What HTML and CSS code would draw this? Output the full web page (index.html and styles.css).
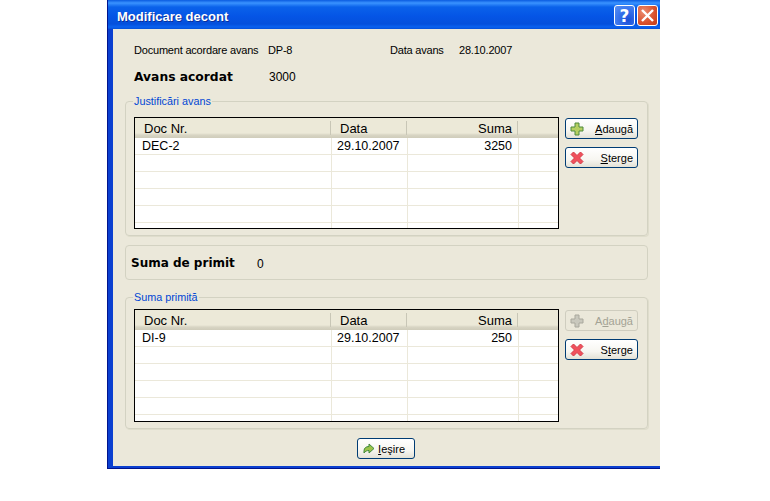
FILE: index.html
```html
<!DOCTYPE html>
<html lang="ro">
<head>
<meta charset="utf-8">
<title>Modificare decont</title>
<link rel="stylesheet" href="styles.css">
</head>
<body>
<div class="window">
  <div class="titlebar">
    <span class="title">Modificare decont</span>
    <span class="cap help">?</span>
    <span class="cap close"><svg width="15" height="15" viewBox="0 0 15 15"><path d="M2 2l11 11M13 2L2 13" stroke="#fff" stroke-width="2.4"/></svg></span>
  </div>
  <div class="client">
    <div class="info">
      <span class="doc-label">Document acordare avans</span><span class="doc-val">DP-8</span>
      <span class="date-label">Data avans</span><span class="date-val">28.10.2007</span>
    </div>
    <div class="advance">
      <span class="big adv-label">Avans acordat</span><span>3000</span>
    </div>
    <fieldset class="group g1">
      <legend>Justificări avans</legend>
      <div class="group-body">
        <table class="grid">
          <thead><tr><th class="c1"><span>Doc Nr.</span></th><th class="c2"><span>Data</span></th><th class="c3"><span>Suma</span></th><th class="c4"></th></tr></thead>
          <tbody>
            <tr><td>DEC-2</td><td>29.10.2007</td><td class="num">3250</td><td></td></tr>
            <tr><td></td><td></td><td></td><td></td></tr>
            <tr><td></td><td></td><td></td><td></td></tr>
            <tr><td></td><td></td><td></td><td></td></tr>
            <tr><td></td><td></td><td></td><td></td></tr>
            <tr class="cut"><td></td><td></td><td></td><td></td></tr>
          </tbody>
        </table>
        <div class="actions">
          <button class="btn"><svg class="ico" width="14" height="14" viewBox="0 0 14 14"><path d="M5 1h4v4h4v4H9v4H5V9H1V5h4z" fill="#b5cf62" stroke="#4f8a3c"/></svg><span class="lbl"><u>A</u>daugă</span></button>
          <button class="btn"><svg class="ico" width="14" height="14" viewBox="0 0 14 14"><path d="M1 3.500L3.500 1 7 4.500 10.500 1 13 3.500 9.500 7 13 10.500 10.500 13 7 9.500 3.500 13 1 10.500 4.500 7z" fill="#f0505c" stroke="#d43a46"/></svg><span class="lbl"><u>S</u>terge</span></button>
        </div>
      </div>
    </fieldset>
    <div class="panel">
      <span class="big sum-label">Suma de primit</span><span class="sum-val">0</span>
    </div>
    <fieldset class="group g2">
      <legend>Suma primită</legend>
      <div class="group-body">
        <table class="grid">
          <thead><tr><th class="c1"><span>Doc Nr.</span></th><th class="c2"><span>Data</span></th><th class="c3"><span>Suma</span></th><th class="c4"></th></tr></thead>
          <tbody>
            <tr><td>DI-9</td><td>29.10.2007</td><td class="num">250</td><td></td></tr>
            <tr><td></td><td></td><td></td><td></td></tr>
            <tr><td></td><td></td><td></td><td></td></tr>
            <tr><td></td><td></td><td></td><td></td></tr>
            <tr><td></td><td></td><td></td><td></td></tr>
            <tr class="cut"><td></td><td></td><td></td><td></td></tr>
          </tbody>
        </table>
        <div class="actions">
          <button class="btn off" disabled><svg class="ico" width="14" height="14" viewBox="0 0 14 14"><path d="M5 1h4v4h4v4H9v4H5V9H1V5h4z" fill="#c9c8bd" stroke="#a9a89d"/></svg><span class="lbl">A<u>d</u>augă</span></button>
          <button class="btn"><svg class="ico" width="14" height="14" viewBox="0 0 14 14"><path d="M1 3.500L3.500 1 7 4.500 10.500 1 13 3.500 9.500 7 13 10.500 10.500 13 7 9.500 3.500 13 1 10.500 4.500 7z" fill="#f0505c" stroke="#d43a46"/></svg><span class="lbl">S<u>t</u>erge</span></button>
        </div>
      </div>
    </fieldset>
    <div class="footer">
      <button class="btn exit"><svg class="ico" width="12" height="12" viewBox="0 0 12 12"><path d="M1 8c0-3 2-4.500 5-4.500V1l5 4.500L6 10V7.500C4 7.500 2.500 8 1 10z" fill="#9cc34a" stroke="#3f8a3c"/></svg><span class="lbl"><u>I</u>eşire</span></button>
    </div>
  </div>
</div>
</body>
</html>
```
FILE: styles.css
```css
* { box-sizing: border-box; }
html, body { margin: 0; padding: 0; background: #fff; }
body {
  width: 770px;
  height: 501px;
  overflow: hidden;
  font-family: "Liberation Sans", Arial, sans-serif;
  font-size: 12px;
  color: #000;
}
.window {
  margin-left: 107px;
  width: 553px;
  height: 469px;
  display: flex;
  flex-direction: column;
  background: #0a3fd0;
  border-left: 1px solid #00138c;
  border-bottom: 1px solid #00138c;
  padding-left: 5px;
  padding-bottom: 2px;
}
.titlebar {
  height: 29px;
  flex: none;
  margin-left: -5px;
  display: flex;
  align-items: center;
  background: linear-gradient(#0a5be0 0, #3a93ff 3px, #0a62ea 7px, #0555e6 16px, #0450dc 24px, #0a62f0 27px, #0450d8 29px);
  padding: 2px 2px 0 9px;
  gap: 2px;
}
.title {
  flex: 1;
  color: #fff;
  font-weight: bold;
  font-size: 13px;
  padding-top: 2px;
  text-shadow: 1px 1px 0 #0a2f9a;
}
.cap {
  width: 21px;
  height: 21px;
  flex: none;
  border: 1px solid #fff;
  border-radius: 3px;
  display: flex;
  align-items: center;
  justify-content: center;
  color: #fff;
  font-weight: bold;
  font-size: 17px;
  font-family: "DejaVu Sans", sans-serif;
}
.help { background: radial-gradient(circle at 70% 75%, #1c50d8, #3c78ee 60%, #5c90f0); }
.close { background: radial-gradient(circle at 30% 30%, #ec8c70, #d8502c 60%, #c23c18); }
.client {
  flex: 1;
  background: #ebe8da;
  padding: 0 12px;
  display: flex;
  flex-direction: column;
  min-height: 0;
}
.info {
  display: flex;
  height: 14px;
  margin: 14px 0 0 9px;
  line-height: 14px;
  font-size: 11px;
  letter-spacing: -.2px;
  white-space: nowrap;
}
.doc-label { width: 134px; }
.doc-val { width: 122px; }
.date-label { width: 69px; }
.advance {
  display: flex;
  align-items: center;
  height: 16px;
  margin: 12px 0 0 9px;
}
.big {
  font-family: "DejaVu Sans", sans-serif;
  font-weight: bold;
  font-size: 12.3px;
}
.adv-label { width: 135px; }
.group {
  margin: 0;
  padding: 0;
  border: 1px solid #d3d2c2;
  border-radius: 4px;
  box-shadow: 1px 1px 0 #dfddcc;
  width: 523px;
  min-width: 0;
  flex: none;
}
.group legend {
  margin-left: 7px;
  padding: 0 1px;
  color: #0046d5;
  font-size: 10.8px;
  line-height: 14px;
}
.g1 { margin-top: 9px; height: 142px; }
.g2 { margin-top: 10px; height: 139px; }
.group-body {
  display: flex;
  padding: 9px 0 0 8px;
}
.g2 .group-body { padding-top: 5px; }
.grid {
  width: 425px;
  height: 112px;
  table-layout: fixed;
  border-collapse: separate;
  border-spacing: 0;
  border: 1px solid #000;
  background: #fff;
  flex: none;
  overflow: hidden;
  display: block;
}
.g2 .grid { height: 113px; }
.grid thead th {
  height: 20px;
  padding: 0;
  background: linear-gradient(#ece9d8 0, #ece9d8 15px, #d8d5c4 17px, #cfccba 20px);
  font-weight: normal;
  font-size: 13px;
  text-align: left;
  vertical-align: top;
}
.grid thead th span {
  display: block;
  height: 14px;
  margin-top: 3px;
  line-height: 16px;
  border-right: 1px solid #c8c6b6;
}
.c1 { width: 197px; min-width: 197px; }
.c2 { width: 76px; min-width: 76px; }
.c3 { width: 111px; min-width: 111px; }
.c4 { width: 39px; min-width: 39px; }
.grid th.c1 span { padding-left: 9px; margin-right: 1px; }
.grid th.c2 span { padding-left: 8px; margin-right: 1px; }
.grid th.c3 span { text-align: right; padding-right: 5px; margin-right: 1px; }
.grid tbody td {
  height: 17px;
  padding: 0 0 0 7px;
  border-right: 1px solid #ebe8da;
  border-bottom: 1px solid #ebe8da;
  font-size: 12.5px;
  line-height: 16px;
  white-space: nowrap;
}
.grid tbody td:nth-child(2) { padding-left: 5px; }
.grid tbody td:last-child { border-right: 0; }
.grid tbody td.num { text-align: right; padding-right: 6px; }
.cut td { height: 6px !important; border-bottom: 0 !important; }
.actions {
  display: flex;
  flex-direction: column;
  gap: 8px;
  margin: 1px 0 0 6px;
}
.btn {
  width: 73px;
  height: 21px;
  display: flex;
  align-items: center;
  padding: 0 4px;
  border: 1px solid #003c74;
  border-radius: 3px;
  background: linear-gradient(#fff 0, #f7f6f1 60%, #e3e1d6 100%);
  font: 11px "Liberation Sans", Arial, sans-serif;
  color: #000;
}
.btn .lbl { margin-left: auto; }
.btn.off {
  color: #a3a294;
  border-color: #cfcdbf;
  background: #ebe8da;
}
.panel {
  width: 523px;
  height: 35px;
  margin-top: 9px;
  flex: none;
  display: flex;
  align-items: center;
  padding-left: 5px;
  border: 1px solid #d3d2c2;
  border-radius: 4px;
}
.panel .sum-label { width: 126px; font-size: 12px; margin-top: 0; }
.sum-val { margin-top: 3px; }
.footer {
  display: flex;
  justify-content: center;
  margin-top: 9px;
  width: 522px;
}
.exit { width: 58px; padding-left: 5px; padding-right: 9px; }
```
